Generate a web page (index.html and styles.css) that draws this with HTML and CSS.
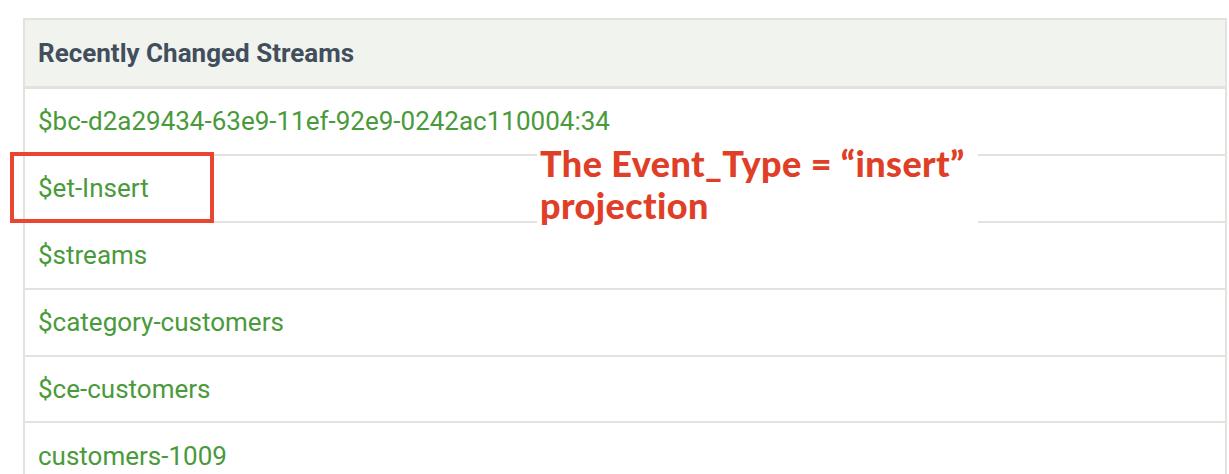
FILE: index.html
```html
<!DOCTYPE html>
<html>
<head>
<meta charset="utf-8">
<link rel="stylesheet" href="styles.css">
</head>
<body>
<div class="page">
  <div class="panel">
    <div class="panel-header">Recently Changed Streams</div>
    <div class="row"><a class="link">$bc-d2a29434-63e9-11ef-92e9-0242ac110004:34</a></div>
    <div class="row"><a class="link">$et-Insert</a></div>
    <div class="row"><a class="link">$streams</a></div>
    <div class="row"><a class="link">$category-customers</a></div>
    <div class="row"><a class="link">$ce-customers</a></div>
    <div class="row"><a class="link">customers-1009</a></div>
  </div>
  <div class="highlight"></div>
  <div class="note">The Event_Type = “insert”<br>projection</div>
</div>
</body>
</html>
```
FILE: styles.css
```css
html, body {
  margin: 0;
  padding: 0;
  background: #ffffff;
}
.page {
  position: relative;
  width: 1229px;
  height: 474px;
  overflow: hidden;
  padding: 18px 0 0 23px;
  box-sizing: border-box;
}
.panel {
  width: 1204px;
  border: 2px solid #e3e3de;
  border-bottom: none;
  box-sizing: border-box;
  font-family: Roboto, "Liberation Sans", sans-serif;
}
.panel-header {
  height: 66px;
  background: #f1f3ef;
  border-bottom: 3px solid #e3e3de;
  display: flex;
  align-items: center;
  padding-left: 13px;
  font-size: 26px;
  font-weight: 700;
  color: #434e5c;
}
.row {
  height: 64.9px;
  border-bottom: 2px solid #e3e3de;
  display: flex;
  align-items: center;
  padding-left: 13px;
}
.link {
  font-size: 26px;
  color: #4a9a3b;
  text-decoration: none;
}
.highlight {
  position: absolute;
  left: 10px;
  top: 152px;
  width: 204px;
  height: 71px;
  border: 4px solid #ea4530;
  box-sizing: border-box;
}
.note {
  position: absolute;
  left: 537px;
  top: 141px;
  width: 441px;
  height: 88px;
  background: #ffffff;
  box-sizing: border-box;
  padding: 1px 0 0 3px;
  font-family: Lato, "Noto Sans", sans-serif;
  font-weight: 900;
  font-size: 36px;
  line-height: 42px;
  letter-spacing: 0.4px;
  color: #e03f27;
}
```
